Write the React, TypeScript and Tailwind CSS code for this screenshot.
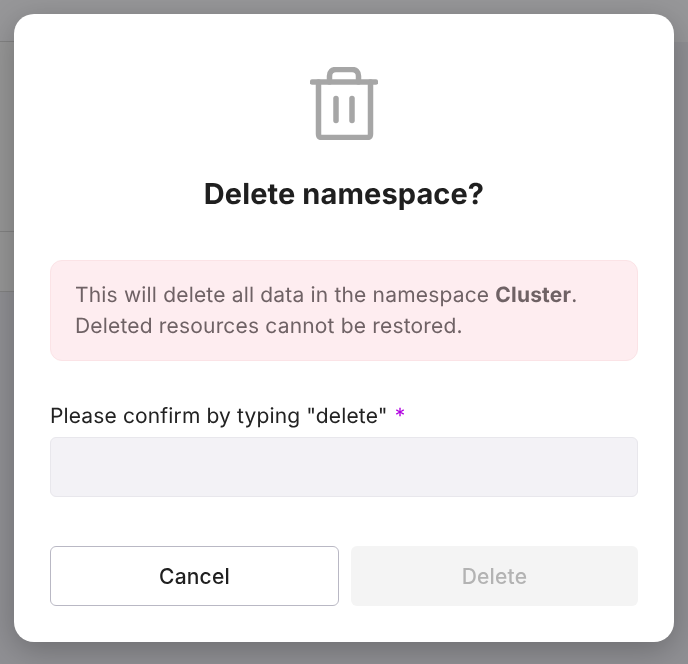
const font = { fontFamily: "Inter, sans-serif" }

export default function App() {
  return (
    <div style={font} className="relative h-[664px] w-[688px] overflow-hidden bg-[#e8e8ee] [text-rendering:geometricPrecision]">
      {/* page behind the dialog */}
      <div className="h-[42px] bg-[#f4f4f8]">
        <div className="h-full w-[300px] border-b border-[#d0d0d0]" />
      </div>
      <div className="h-[190px] w-[300px] border-b border-[#d0d0d0] bg-[#f5f5f5]" />
      <div className="h-[60px] w-[300px] border-b border-[#d0d0d0] bg-[#f5f5f5]" />

      {/* backdrop */}
      <div className="absolute inset-0 flex items-start justify-center bg-[#252525]/45 pt-[14px]">
        <div className="flex h-[628px] w-[660px] flex-col rounded-[20px] bg-white px-9 shadow-[0_8px_32px_rgba(0,0,0,0.25)] will-change-transform">
          <div className="mt-[53px] flex justify-center">
            <svg width="68" height="73" viewBox="0 0 68 73" fill="none" stroke="#a6a6a6" strokeWidth="5.500" strokeLinecap="round" strokeLinejoin="round">
              <path d="M2.500 15H65.500" />
              <path d="M8.500 15V67C8.500 69.500 9.500 70.500 12 70.500H57C59.500 70.500 60.500 69.500 60.500 67V15" />
              <path d="M19.500 15V9C19.500 5 22 2.500 26 2.500H42C46 2.500 48.500 5 48.500 9V15" />
              <path d="M26 31.500V53.500" />
              <path d="M42 31.500V53.500" />
            </svg>
          </div>
          <h2 className="mt-[34px] text-center text-[29px] leading-[40px] font-bold tracking-[0.1px] text-[#1f1f1f]">Delete namespace?</h2>
          <div className="mt-[46px] rounded-xl border border-[#fbe3e6] bg-[#feedf0] px-6 pt-[19px] pb-[18px] text-[21px] leading-[31px] tracking-[0.18px] text-[#6f6265]">
            This will delete all data in the namespace <b className="font-bold">Cluster</b>.
            <br />
            Deleted resources cannot be restored.
          </div>
          <label className="mt-[40px] text-[21px] leading-[31px] tracking-[0.14px] text-[#222222]">
            Please confirm by typing "delete" <span className="ml-[1px] text-[#b000e0]">*</span>
          </label>
          <input disabled className="mt-[5px] h-[60px] rounded-md border border-[#e8e7ec] bg-[#f3f2f6]" />
          <div className="mt-[49px] grid grid-cols-[289px_1fr] gap-3">
            <button className="h-[60px] rounded-md border border-[#b9b8c4] bg-white pt-[2px] text-[21px] font-medium tracking-[0.2px] text-[#1f1f1f]">Cancel</button>
            <button disabled className="h-[60px] rounded-md bg-[#f4f4f4] pt-[2px] text-[21px] font-medium tracking-[0.2px] text-[#b3b3b3]">Delete</button>
          </div>
        </div>
      </div>
    </div>
  )
}
